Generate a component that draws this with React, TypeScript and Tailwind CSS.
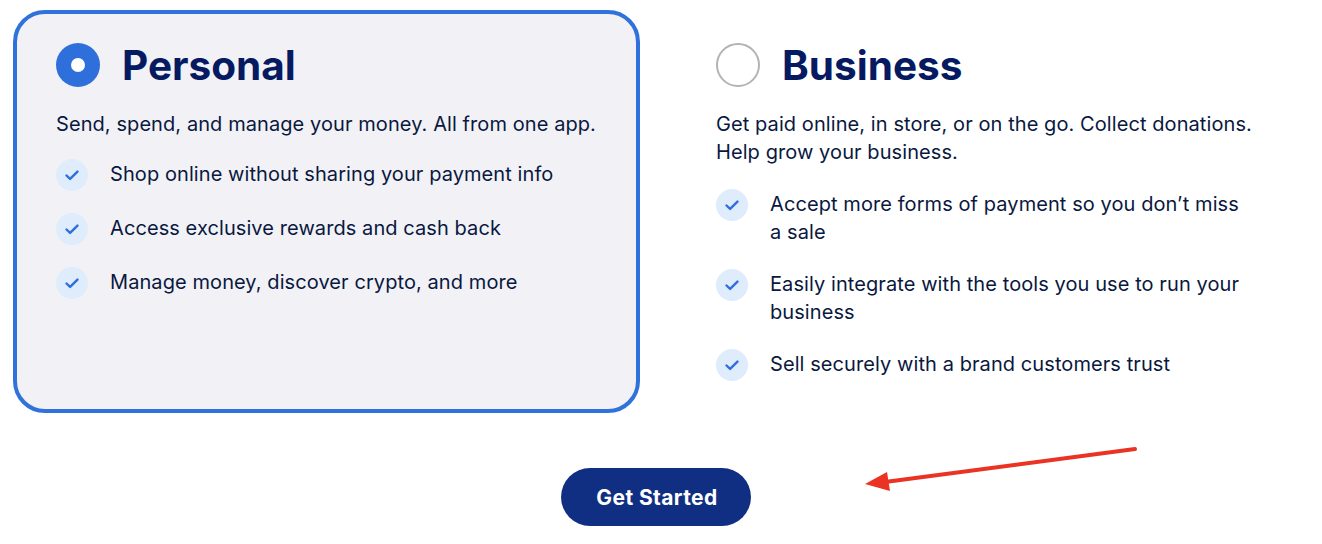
function CheckIcon() {
  return (
    <span className="-my-px flex h-8 w-8 shrink-0 items-center justify-center rounded-full bg-[#deecfb]">
      <svg className="h-4 w-4" viewBox="0 0 16 16" fill="none">
        <path d="M2.5 8.5l3.6 3.4L13.5 4.6" stroke="#2f6fdc" strokeWidth={2.4} strokeLinecap="round" strokeLinejoin="round" />
      </svg>
    </span>
  );
}

function Feature({ children }: { children: React.ReactNode }) {
  return (
    <li className="flex gap-[22px]">
      <CheckIcon />
      <span className="text-[20px] leading-[28px] tracking-[0.08px] text-[#0a1840]">{children}</span>
    </li>
  );
}

function Heading({ title, selected }: { title: string; selected: boolean }) {
  return (
    <div className="flex items-center gap-[22px]">
      {selected ? (
        <span className="flex h-11 w-11 items-center justify-center rounded-full bg-[#2f6fdc]">
          <span className="h-[14px] w-[14px] rounded-full bg-white" />
        </span>
      ) : (
        <span className="h-11 w-11 rounded-full border-2 border-[#b3b3b3] bg-white" />
      )}
      <h2 className="h-11 pt-px text-[40.5px] leading-[44px] font-bold text-[#061a61]">{title}</h2>
    </div>
  );
}

export default function App() {
  return (
    <div className="relative h-[544px] w-[1322px] overflow-hidden bg-white font-['Inter',sans-serif]">
      <div className="flex items-start pt-[10px] pl-[13px]">
        <div className="h-[403px] w-[627px] rounded-[32px] border-[4px] border-[#2f72dc] bg-[#f2f2f6] pt-[29px] pl-[39px]">
          <Heading title="Personal" selected />
          <p className="mt-[23px] text-[20px] leading-[28px] tracking-[0.08px] text-[#0a1840]">
            Send, spend, and manage your money. All from one app.
          </p>
          <ul className="mt-[22px] flex flex-col gap-[24px]">
            <Feature>Shop online without sharing your payment info</Feature>
            <Feature>Access exclusive rewards and cash back</Feature>
            <Feature>Manage money, discover crypto, and more</Feature>
          </ul>
        </div>
        <div className="ml-[76px] w-[560px] pt-[33px]">
          <Heading title="Business" selected={false} />
          <p className="mt-[23px] text-[20px] leading-[28px] tracking-[0.08px] text-[#0a1840]">
            Get paid online, in store, or on the go. Collect donations.
            <br />
            Help grow your business.
          </p>
          <ul className="mt-[24px] flex flex-col gap-[24px]">
            <Feature>
              Accept more forms of payment so you don’t miss
              <br />a sale
            </Feature>
            <Feature>
              Easily integrate with the tools you use to run your
              <br />
              business
            </Feature>
            <Feature>Sell securely with a brand customers trust</Feature>
          </ul>
        </div>
      </div>
      <div className="mt-[55px] flex justify-center pr-[10px]">
        <button className="h-[58px] w-[190px] rounded-full bg-[#112f82] pt-px pl-[2px] text-[21px] font-bold tracking-[0.4px] text-white">
          Get Started
        </button>
      </div>
      <svg className="absolute top-[440px] left-[860px] h-[60px] w-[285px]" viewBox="0 0 285 60" fill="none">
        <path d="M25 42L275 9" stroke="#ea3323" strokeWidth={4} strokeLinecap="round" />
        <path d="M5 44L27 32L30 51Z" fill="#ea3323" />
      </svg>
    </div>
  );
}
